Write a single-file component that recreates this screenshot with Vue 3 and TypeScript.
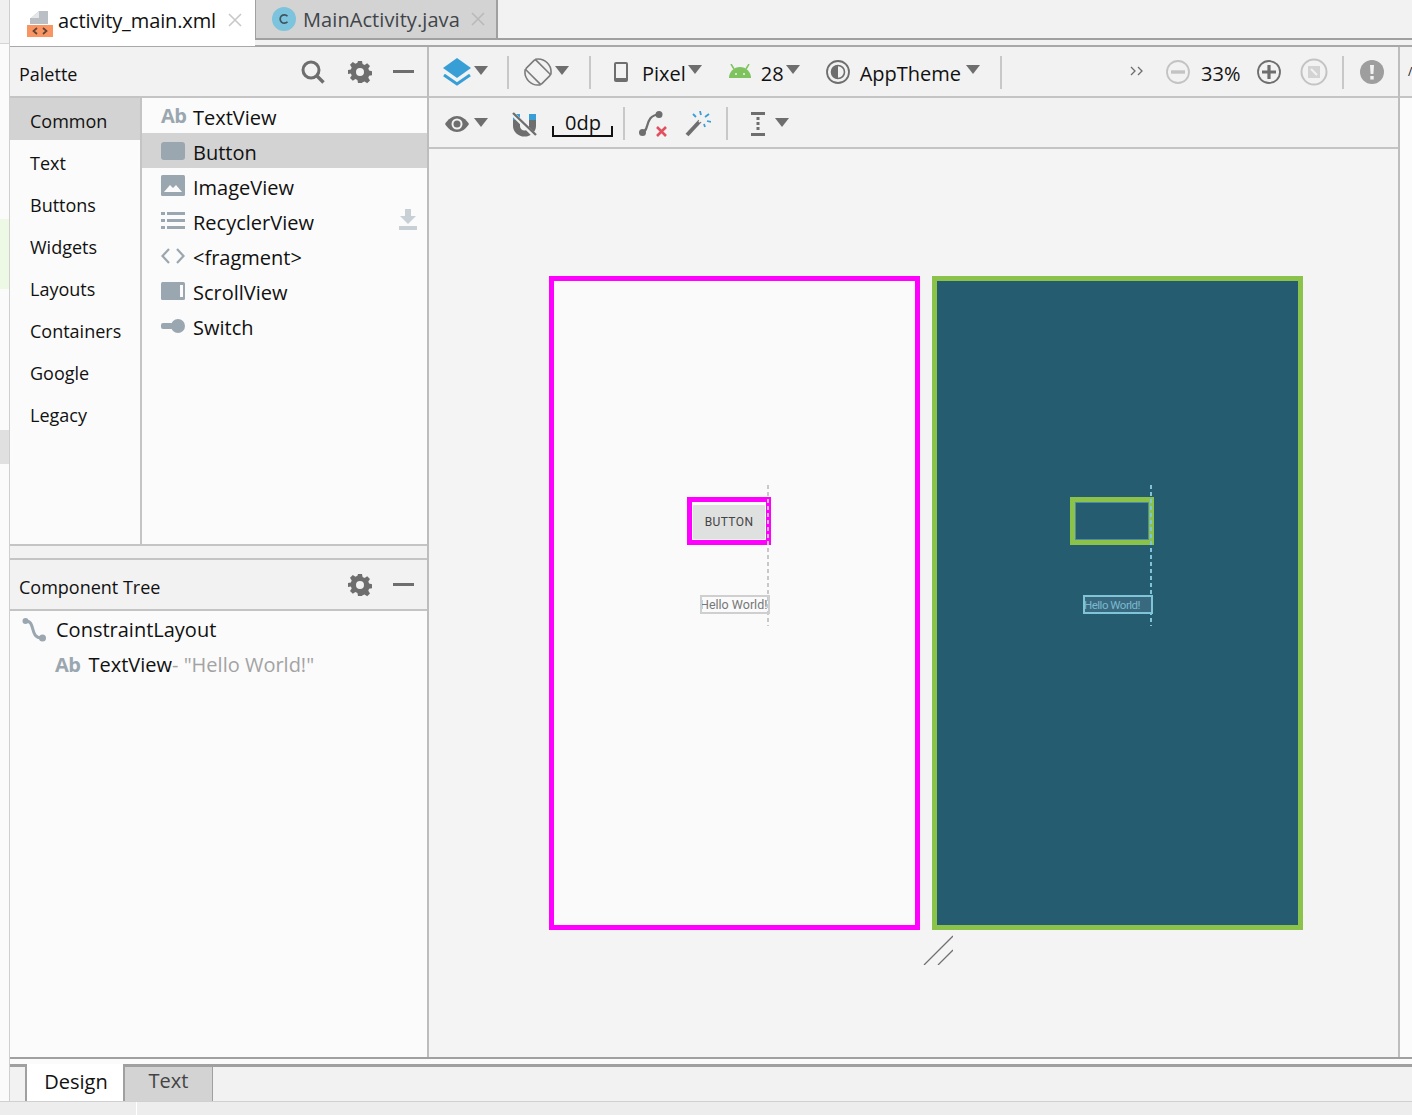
<script setup lang="ts">
const categories = ['Common', 'Text', 'Buttons', 'Widgets', 'Layouts', 'Containers', 'Google', 'Legacy']
const widgets = ['TextView', 'Button', 'ImageView', 'RecyclerView', '<fragment>', 'ScrollView', 'Switch']
</script>

<template>
  <div class="app">
    <div class="gutter">
      <div class="gutter-top"></div>
      <div class="gutter-green"></div>
      <div class="gutter-gray"></div>
    </div>

    <div class="ide">
      <div class="tabs">
        <div class="tab tab--active">
          <svg class="xml-icon" width="26" height="26" viewBox="0 0 26 26">
            <path d="M4 7L12 0h9v13H3V7z" fill="#b9bfc4" />
            <path d="M12 0L4 7h8z" fill="#e4e6e8" />
            <rect x="0" y="14" width="26" height="12" fill="#f99463" />
            <path d="M10 17l-3.500 3 3.500 3M16 17l3.500 3-3.500 3" fill="none" stroke="#5f4335" stroke-width="1.700" />
          </svg>
          <span class="tab-name">activity_main.xml</span>
          <svg class="tab-close" width="14" height="14" viewBox="0 0 14 14"><path d="M1 1l12 12M13 1L1 13" stroke="#c8c8c8" stroke-width="1.600" /></svg>
        </div>
        <div class="tab tab--idle">
          <svg class="class-icon" width="24" height="24" viewBox="0 0 24 24">
            <circle cx="12" cy="12" r="12" fill="#7cc4dd" />
            <path d="M15.500 9.200a4.200 4.200 0 1 0 0 5.600" fill="none" stroke="#3e5661" stroke-width="1.700" />
          </svg>
          <span class="tab-name">MainActivity.java</span>
          <svg class="tab-close" width="14" height="14" viewBox="0 0 14 14"><path d="M1 1l12 12M13 1L1 13" stroke="#b9b9b9" stroke-width="1.600" /></svg>
        </div>
        <div class="tab-rest"></div>
      </div>

      <div class="main">
        <aside class="side">
          <div class="panel-head">
            <span class="panel-title">Palette</span>
            <svg class="head-search" width="26" height="26" viewBox="0 0 26 26">
              <circle cx="11" cy="11" r="8" fill="none" stroke="#6e6e6e" stroke-width="3" />
              <path d="M16.500 16.500l7 7" stroke="#6e6e6e" stroke-width="3.400" />
            </svg>
            <svg class="head-gear" width="24" height="24" viewBox="0 0 24 24">
              <path fill="#6e6e6e" fill-rule="evenodd" d="M10 1h4l.6 3 2 .9 2.600-1.700 2.800 2.800-1.700 2.600.8 2 2.900.6v4l-2.900.6-.8 2 1.700 2.600-2.800 2.800-2.600-1.700-2 .8L14 23h-4l-.6-3.100-2-.8-2.600 1.700-2.800-2.800 1.700-2.600-.8-2L0 14v-4l2.900-.6.8-2-1.700-2.600 2.800-2.800 2.600 1.700 2-.9zM12 8a4 4 0 1 0 0 8 4 4 0 0 0 0-8z" />
            </svg>
            <span class="head-dash"></span>
          </div>

          <div class="palette">
            <ul class="cats">
              <li v-for="(c, i) in categories" :key="c" class="cat" :class="{ 'cat--on': i === 0 }">{{ c }}</li>
            </ul>
            <ul class="widgets">
              <li v-for="w in widgets" :key="w" class="widget" :class="{ 'widget--on': w === 'Button' }">
                <span class="w-icon">
                  <span v-if="w === 'TextView'" class="ab">Ab</span>
                  <svg v-else-if="w === 'Button'" width="24" height="18" viewBox="0 0 24 18"><rect width="24" height="18" rx="3" fill="#9aa7b0" /></svg>
                  <svg v-else-if="w === 'ImageView'" width="24" height="22" viewBox="0 0 24 22">
                    <rect width="24" height="21" rx="1.500" fill="#9aa7b0" />
                    <path d="M3 17l6-7 3 3 3-3 6 7z" fill="#fbfbfb" />
                  </svg>
                  <svg v-else-if="w === 'RecyclerView'" width="24" height="18" viewBox="0 0 24 18">
                    <path fill="#9aa7b0" d="M0 0h4v3H0zM6 0h18v3H6zM0 7h4v3H0zM6 7h18v3H6zM0 14h4v3H0zM6 14h18v3H6z" />
                  </svg>
                  <svg v-else-if="w === '<fragment>'" width="24" height="18" viewBox="0 0 24 18">
                    <path d="M8 2L1.500 9 8 16M16 2l6.500 7L16 16" fill="none" stroke="#9aa7b0" stroke-width="2.200" />
                  </svg>
                  <svg v-else-if="w === 'ScrollView'" width="24" height="18" viewBox="0 0 24 18">
                    <rect width="24" height="18" rx="1.500" fill="#9aa7b0" />
                    <rect x="19" y="3" width="3" height="12" fill="#fbfbfb" />
                  </svg>
                  <svg v-else width="24" height="14" viewBox="0 0 24 14">
                    <rect x="0" y="4" width="12" height="6" rx="2" fill="#9aa7b0" />
                    <circle cx="17" cy="7" r="7" fill="#9aa7b0" />
                  </svg>
                </span>
                <span class="w-name">{{ w }}</span>
                <svg v-if="w === 'RecyclerView'" class="w-download" width="18" height="22" viewBox="0 0 18 22">
                  <path d="M6 0h6v7h5l-8 8-8-8h5zM0 17h18v4H0z" fill="#c8d0d6" />
                </svg>
              </li>
            </ul>
          </div>

          <div class="splitter"></div>

          <div class="panel-head panel-head--tree">
            <span class="panel-title">Component Tree</span>
            <svg class="head-gear" width="24" height="24" viewBox="0 0 24 24">
              <path fill="#6e6e6e" fill-rule="evenodd" d="M10 1h4l.6 3 2 .9 2.600-1.700 2.800 2.800-1.700 2.600.8 2 2.900.6v4l-2.900.6-.8 2 1.700 2.600-2.800 2.800-2.600-1.700-2 .8L14 23h-4l-.6-3.100-2-.8-2.600 1.700-2.800-2.800 1.700-2.600-.8-2L0 14v-4l2.900-.6.8-2-1.700-2.600 2.800-2.800 2.600 1.700 2-.9zM12 8a4 4 0 1 0 0 8 4 4 0 0 0 0-8z" />
            </svg>
            <span class="head-dash"></span>
          </div>

          <div class="tree">
            <div class="tree-row">
              <svg class="tree-icon" width="24" height="24" viewBox="0 0 24 24">
                <circle cx="3.500" cy="3" r="3" fill="#9aa7b0" />
                <circle cx="20.500" cy="20" r="3.500" fill="#9aa7b0" />
                <path d="M4 3C14 3 7 20 20 20" fill="none" stroke="#9aa7b0" stroke-width="3" />
              </svg>
              <span class="w-name">ConstraintLayout</span>
            </div>
            <div class="tree-row tree-row--child">
              <span class="ab">Ab</span>
              <span class="w-name">TextView</span><span class="tree-note">- "Hello World!"</span>
            </div>
          </div>
        </aside>

        <section class="design">
          <div class="bar bar--top">
            <svg class="i-layers" width="28" height="28" viewBox="0 0 28 28">
              <path d="M14 0l14 10-14 10L0 10z" fill="#389fd6" />
              <path d="M1 17l13 9 13-9" fill="none" stroke="#389fd6" stroke-width="3" />
            </svg>
            <span class="caret caret--a"></span>
            <span class="sep sep--a"></span>
            <svg class="i-rotate" width="28" height="28" viewBox="0 0 28 28">
              <rect x="7" y="3" width="14" height="22" rx="1.500" transform="rotate(-45 14 14)" fill="none" stroke="#7b7b7b" stroke-width="1.600" />
              <path d="M11.200 1.300A13 13 0 0 1 26.700 16.800M16.800 26.700A13 13 0 0 1 1.300 11.200" fill="none" stroke="#7b7b7b" stroke-width="1.600" />
            </svg>
            <span class="caret caret--b"></span>
            <span class="sep sep--b"></span>
            <svg class="i-phone" width="16" height="22" viewBox="0 0 16 22">
              <rect x="1" y="1" width="14" height="20" rx="2" fill="#6e6e6e" />
              <rect x="3" y="3" width="10" height="14" fill="#f2f2f2" />
            </svg>
            <span class="bar-text t-pixel">Pixel</span>
            <span class="caret caret--tight"></span>
            <svg class="i-android" width="22" height="14" viewBox="0 0 22 14">
              <path d="M0 14a11 11 0 0 1 22 0z" fill="#7ec35d" />
              <path d="M5 5L2 0M17 5l3-5" stroke="#7ec35d" stroke-width="1.500" />
              <circle cx="7" cy="10" r="1" fill="#f2f2f2" />
              <circle cx="15" cy="10" r="1" fill="#f2f2f2" />
            </svg>
            <span class="bar-text t-api">28</span>
            <span class="caret caret--tight"></span>
            <svg class="i-theme" width="24" height="24" viewBox="0 0 24 24">
              <circle cx="12" cy="12" r="11" fill="none" stroke="#6e6e6e" stroke-width="1.800" />
              <circle cx="12" cy="12" r="6.500" fill="none" stroke="#6e6e6e" stroke-width="1.600" />
              <path d="M12 5.500a6.500 6.500 0 0 0 0 13z" fill="#6e6e6e" />
            </svg>
            <span class="bar-text t-theme">AppTheme</span>
            <span class="caret caret--theme"></span>
            <span class="sep sep--c"></span>
            <svg class="i-chevrons" width="13" height="10" viewBox="0 0 13 10">
              <path d="M1 1l4 4-4 4M8 1l4 4-4 4" fill="none" stroke="#6e6e6e" stroke-width="1.300" />
            </svg>
            <svg class="i-minus" width="24" height="24" viewBox="0 0 24 24">
              <circle cx="12" cy="12" r="11" fill="none" stroke="#c3c3c3" stroke-width="1.800" />
              <path d="M5 12h14" stroke="#c3c3c3" stroke-width="3.400" />
            </svg>
            <span class="bar-text t-zoom">33%</span>
            <svg class="i-plus" width="24" height="24" viewBox="0 0 24 24">
              <circle cx="12" cy="12" r="11" fill="none" stroke="#6e6e6e" stroke-width="1.800" />
              <path d="M5 12h14M12 5v14" stroke="#6e6e6e" stroke-width="3.200" />
            </svg>
            <svg class="i-fit" width="28" height="28" viewBox="0 0 28 28">
              <circle cx="14" cy="14" r="12.500" fill="none" stroke="#c3c3c3" stroke-width="2" />
              <path d="M8 8h12v12H8z" fill="#d3d3d3" />
              <path d="M11 11l6 6" stroke="#f2f2f2" stroke-width="2" />
            </svg>
            <span class="sep sep--d"></span>
            <svg class="i-warn" width="24" height="24" viewBox="0 0 24 24">
              <circle cx="12" cy="12" r="12" fill="#9e9e9e" />
              <path d="M10 5h4l-.6 9h-2.800zM10.300 16h3.400v3.400h-3.400z" fill="#f2f2f2" />
            </svg>
          </div>

          <div class="bar bar--sub">
            <svg class="i-eye" width="24" height="16" viewBox="0 0 24 16">
              <path d="M0 8c3-5 7.500-8 12-8s9 3 12 8c-3 5-7.500 8-12 8S3 13 0 8z" fill="#6e6e6e" />
              <circle cx="12" cy="8" r="5.500" fill="#f2f2f2" />
              <circle cx="12" cy="8" r="3.500" fill="#6e6e6e" />
            </svg>
            <span class="caret caret--eye"></span>
            <svg class="i-magnet" width="25" height="26" viewBox="0 0 25 26">
              <path d="M1 9h7v6a4.500 4.500 0 0 0 9 0V9h7v6a11.500 10.500 0 0 1-23 0z" fill="#6e6e6e" />
              <rect x="1" y="3" width="7" height="6" fill="#389fd6" />
              <rect x="17" y="3" width="7" height="6" fill="#389fd6" />
              <path d="M1 3l22 22" stroke="#f2f2f2" stroke-width="4.500" />
              <path d="M1 2l23 22" stroke="#6e6e6e" stroke-width="2.400" />
            </svg>
            <div class="margin-box"><span class="margin-text">0dp</span></div>
            <span class="sep sep--e"></span>
            <svg class="i-path" width="28" height="26" viewBox="0 0 28 26">
              <circle cx="3.500" cy="21.500" r="3.500" fill="#6e6e6e" />
              <circle cx="20" cy="3.500" r="3.500" fill="#6e6e6e" />
              <path d="M3 21c8 0 2-17 17-17.500" fill="none" stroke="#6e6e6e" stroke-width="2.200" />
              <path d="M18 16l9 9M27 16l-9 9" stroke="#e0505f" stroke-width="2.600" />
            </svg>
            <svg class="i-wand" width="26" height="26" viewBox="0 0 26 26">
              <path d="M2 24L15 10" stroke="#6e6e6e" stroke-width="4" />
              <path d="M14 11l3-3" stroke="#f2f2f2" stroke-width="2" />
              <path d="M15 0l1 4M24 3l-4 3M26 11l-4-1M20 16l-1-3M8 3l3 3" stroke="#389fd6" stroke-width="1.800" />
            </svg>
            <span class="sep sep--f"></span>
            <svg class="i-margin" width="14" height="24" viewBox="0 0 14 24">
              <path d="M0 0h14v3H0zM0 21h14v3H0z" fill="#6e6e6e" />
              <path d="M5.500 5h3v3h-3zM5.500 10h3v3h-3zM5.500 15h3v3h-3z" fill="#6e6e6e" />
            </svg>
            <span class="caret caret--margin"></span>
          </div>

          <div class="canvas">
            <div class="screen screen--light">
              <div class="sel sel--light"></div>
              <div class="fake-button">BUTTON</div>
              <div class="guide guide--light"></div>
              <div class="hello hello--light">Hello World!</div>
            </div>
            <div class="screen screen--blue">
              <div class="sel sel--blue"><div class="sel-inner"></div></div>
              <div class="guide guide--blue"></div>
              <div class="hello hello--blue">Hello World!</div>
            </div>
            <svg class="resize" width="30" height="30" viewBox="0 0 30 30">
              <path d="M1 30L30 1M15 30L30 15" stroke="#707070" stroke-width="1.300" />
            </svg>
          </div>
        </section>

        <div class="edge">
          <div class="edge-top"><span class="edge-clip">/</span></div>
        </div>
      </div>

      <div class="foot">
        <div class="foot-gap"></div>
        <div class="foot-tabs">
          <div class="foot-stub"></div>
          <div class="foot-tab foot-tab--on">Design</div>
          <div class="foot-tab foot-tab--off">Text</div>
          <div class="foot-rest"></div>
        </div>
      </div>
    </div>

    <div class="status">
      <span class="status-tick"></span>
    </div>
  </div>
</template>

<style>
html, body { margin: 0; background: #fbfbfb; }
</style>

<style scoped>
.app {
  width: 1412px;
  height: 1115px;
  display: grid;
  grid-template-columns: 10px 1fr;
  grid-template-rows: 1fr 14px;
  overflow: hidden;
  font-family: "Open Sans", "Noto Sans", sans-serif;
  color: #111;
  background: #fbfbfb;
}
ul { list-style: none; margin: 0; padding: 0; }
svg { display: block; flex: none; }

.gutter {
  display: flex;
  flex-direction: column;
  border-right: 1px solid #cfcfcf;
  background: #fbfbfb;
}
.gutter-top { height: 43px; background: #f0f0f0; border-bottom: 1px solid #d4d4d4; }
.gutter-green { height: 70px; margin-top: 175px; background: #eef9e5; }
.gutter-gray { height: 34px; margin-top: 141px; background: #e0e0e0; }

.ide { display: flex; flex-direction: column; min-width: 0; }

.tabs { height: 47px; display: flex; background: #f2f2f2; border-bottom: 2px solid #a8a8a8; box-sizing: border-box; }
.tab { display: flex; align-items: center; font-size: 20px; box-sizing: border-box; }
.tab--active { width: 245px; height: 46px; background: #fff; padding: 0 0 6px 17px; }
.tab--active .xml-icon { margin-top: 7px; }
.tab--active .tab-close { margin-left: 12px; }
.tab--idle {
  width: 243px;
  height: 40px;
  padding: 0 0 0 16px;
  background: #d3d3d3;
  color: #3f4549;
  border-left: 1px solid #a0a0a0;
  border-right: 2px solid #a0a0a0;
  border-bottom: 2px solid #a0a0a0;
}
.tab--idle .tab-name { letter-spacing: 0.08px; }
.xml-icon { margin-right: 5px; }
.class-icon { margin-right: 7px; }
.tab-name { letter-spacing: -0.12px; white-space: nowrap; }
.tab-close { margin-left: 11px; }
.tab-rest { flex: 1; height: 40px; box-sizing: border-box; border-bottom: 2px solid #a0a0a0; }

.main { flex: 1; display: flex; min-height: 0; }

.side { width: 417px; display: flex; flex-direction: column; border-right: 2px solid #bdbdbd; box-sizing: content-box; flex: none; }
.panel-head {
  height: 49px;
  display: flex;
  align-items: center;
  background: #f2f2f2;
  border-bottom: 2px solid #c4c4c4;
  padding-left: 9px;
  flex: none;
}
.panel-title { font-size: 18px; padding-top: 5px; }
.head-search { margin-left: auto; margin-top: 1px; }
.head-gear { margin-left: 22px; }
.panel-head--tree .head-gear { margin-left: auto; }
.head-dash { width: 21px; height: 3px; background: #6e6e6e; margin: 0 13px 0 21px; }

.palette { height: 446px; display: flex; flex: none; border-bottom: 2px solid #c4c4c4; background: #fbfbfb; }
.cats { width: 130px; border-right: 2px solid #c4c4c4; flex: none; }
.cat { height: 42px; line-height: 47px; padding-left: 20px; font-size: 18px; box-sizing: border-box; }
.cat--on { background: #d3d3d3; }
.widgets { flex: 1; }
.widget { height: 35px; display: flex; align-items: center; padding-left: 19px; font-size: 20px; position: relative; }
.widget .w-name { padding-top: 3px; }
.widget--on { background: #d3d3d3; }
.w-icon { width: 24px; height: 24px; display: flex; align-items: center; margin-right: 8px; flex: none; }
.w-name { white-space: nowrap; }
.ab { font-size: 20px; font-weight: 700; color: #9aa7b0; letter-spacing: -0.5px; line-height: 24px; }
.w-download { position: absolute; right: 10px; top: 6px; }

.splitter { height: 12px; flex: none; background: #f2f2f2; border-bottom: 2px solid #c4c4c4; }

.tree { flex: 1; background: #fbfbfb; padding-top: 1px; }
.tree-row { height: 35px; display: flex; align-items: center; padding-left: 12px; font-size: 20px; }
.tree-icon { margin-right: 10px; }
.tree-row--child { padding-left: 45px; }
.tree-row--child .ab { margin-right: 8px; }
.tree-note { color: #a3a3a3; white-space: nowrap; }

.design { width: 969px; display: flex; flex-direction: column; flex: none; }
.bar {
  display: flex;
  align-items: center;
  background: #f2f2f2;
  flex: none;
  box-sizing: border-box;
  border-bottom: 2px solid #c4c4c4;
  font-size: 20px;
}
.bar--top { height: 51px; padding: 1px 0 0 14px; }
.bar--sub { height: 51px; padding: 2px 0 0 16px; }
.bar-text { white-space: nowrap; padding-top: 2px; }

.caret {
  width: 0;
  height: 0;
  border-left: 7.5px solid transparent;
  border-right: 7.5px solid transparent;
  border-top: 9px solid #6e6e6e;
  margin-left: 3px;
  margin-bottom: 3px;
  flex: none;
}
.caret--tight { margin-left: 2px; margin-bottom: 6px; }
.caret--theme { margin-left: 5px; margin-bottom: 6px; }
.caret--eye { margin-left: 5px; margin-bottom: 3px; }
.caret--margin { margin-left: 10px; margin-bottom: 2px; }

.sep { width: 2px; height: 33px; background: #c8c8c8; flex: none; }
.sep--a { margin-left: 19px; }
.sep--b { margin-left: 20px; }
.sep--c { margin-left: 20px; }
.sep--d { margin-left: 14px; }
.sep--e { margin-left: 10px; }
.sep--f { margin-left: 15px; }

.i-rotate { margin-left: 15px; }
.i-phone { margin-left: 22px; }
.t-pixel { margin-left: 13px; }
.i-android { margin-left: 27px; margin-bottom: 2px; }
.t-api { margin-left: 10px; }
.i-theme { margin-left: 26px; }
.t-theme { margin-left: 10px; }
.i-chevrons { margin-left: 128px; margin-bottom: 3px; }
.i-minus { margin-left: 23px; }
.t-zoom { margin-left: 11px; }
.i-plus { margin-left: 16px; }
.i-fit { margin-left: 19px; }
.i-warn { margin-left: 16px; }

.i-magnet { margin-left: 24px; }
.margin-box {
  margin-left: 15px;
  width: 61px;
  height: 11px;
  box-sizing: border-box;
  border: 2px solid #111;
  border-top: 0;
  position: relative;
  margin-top: 15px;
  flex: none;
}
.margin-text { position: absolute; left: 11px; bottom: 0; font-size: 20px; line-height: 24px; }
.i-path { margin-left: 14px; }
.i-wand { margin-left: 18px; }
.i-margin { margin-left: 23px; }

.canvas {
  flex: 1;
  display: flex;
  gap: 12px;
  align-items: flex-start;
  padding: 127px 0 0 120px;
  background: #f4f4f4;
  position: relative;
}
.screen { width: 371px; height: 654px; box-sizing: border-box; border: 5px solid; position: relative; flex: none; }
.screen--light { border-color: #ff00ff; background: #fafafa; }
.screen--blue { border-color: #8bc34a; background: #255c70; }

.sel { position: absolute; top: 216px; width: 84px; height: 48px; box-sizing: border-box; border: 5px solid; }
.sel--light { left: 133px; border-color: #ff00ff; }
.sel--blue { left: 133px; border-color: #8bc34a; }
.sel-inner { height: 100%; border: 1px solid #4f8ba3; box-sizing: border-box; }

.fake-button {
  position: absolute;
  left: 139px;
  top: 224px;
  width: 72px;
  height: 34px;
  background: #dfe0e0;
  border-radius: 1px;
  color: #444;
  font: 12px/34px Roboto, sans-serif;
  letter-spacing: 0.4px;
  text-align: center;
}
.guide {
  position: absolute;
  top: 204px;
  height: 141px;
  width: 2px;
  left: 213px;
  background: repeating-linear-gradient(to bottom, var(--dash) 0 4px, transparent 4px 7px);
}
.guide--light { --dash: #c8c8c8; }
.guide--blue { --dash: #7fc4d8; }

.hello {
  position: absolute;
  top: 314px;
  left: 146px;
  width: 70px;
  height: 19px;
  box-sizing: border-box;
  border: 2px solid;
  font: 12.5px/15px Roboto, sans-serif;
  white-space: nowrap;
  overflow: hidden;
}
.hello--light { border-color: #cfcfcf; color: #777; text-indent: -2px; }
.hello--blue { border-color: #7fc4d8; color: #79b9cf; background: #38697f; font-size: 11.5px; line-height: 16px; letter-spacing: -0.5px; text-indent: -1px; }

.resize { position: absolute; left: 494px; top: 786px; }

.edge { flex: 1; background: #fbfbfb; overflow: hidden; border-left: 2px solid #bdbdbd; }
.edge-top { height: 49px; background: #f2f2f2; border-bottom: 2px solid #c4c4c4; overflow: hidden; }
.edge-clip { display: block; margin: 17px 0 0 8px; font-size: 12px; line-height: 16px; }

.foot { flex: none; }
.foot-gap { height: 7px; box-sizing: border-box; border-top: 2px solid #a0a0a0; background: #fbfbfb; }
.foot-tabs { height: 37px; display: flex; }
.foot-stub { width: 17px; box-sizing: border-box; background: #f2f2f2; border-top: 3px solid #a0a0a0; border-right: 2px solid #a0a0a0; }
.foot-tab { box-sizing: border-box; font-size: 20px; text-align: center; }
.foot-tab--on { width: 96px; background: #fff; line-height: 35px; padding-left: 2px; }
.foot-tab--off {
  width: 90px;
  background: #d3d3d3;
  color: #444;
  border-top: 3px solid #a0a0a0;
  border-left: 2px solid #a0a0a0;
  border-right: 1px solid #a0a0a0;
  line-height: 27px;
}
.foot-rest { flex: 1; background: #f2f2f2; border-top: 3px solid #a0a0a0; }

.status {
  grid-column: 1 / 3;
  background: #ededed;
  border-top: 1px solid #d0d0d0;
  box-sizing: border-box;
  position: relative;
}
.status-tick { position: absolute; left: 136px; top: 0; width: 1px; height: 14px; background: #fff; }
</style>
